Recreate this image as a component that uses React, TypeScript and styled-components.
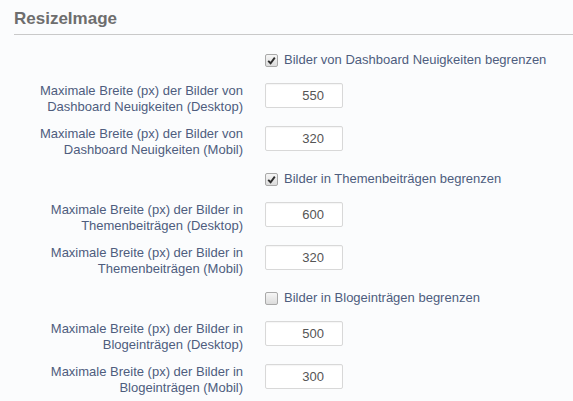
import styled, { createGlobalStyle } from 'styled-components';

const GlobalStyle = createGlobalStyle`
  html, body {
    margin: 0;
    padding: 0;
    background: #fbfcfd;
  }
  body {
    font-family: 'Liberation Sans', Arial, sans-serif;
  }
`;

const Page = styled.div`
  width: 573px;
  height: 401px;
  overflow: hidden;
  padding-left: 14px;
  box-sizing: border-box;
`;

const Heading = styled.h2`
  margin: 0;
  padding-top: 8px;
  height: 26px;
  font-size: 17px;
  line-height: 22px;
  font-weight: bold;
  color: #6e6e6e;
  border-bottom: 1px solid #c9c9c9;
`;

const Form = styled.div`
  display: flex;
  flex-direction: column;
  padding-top: 15px;
`;

const Row = styled.div<{ $check?: boolean }>`
  display: grid;
  grid-template-columns: 229px 1fr;
  column-gap: 22px;
  align-items: start;
  height: ${(p) => (p.$check ? '22px' : '32px')};
  margin-bottom: 11px;
`;

const Label = styled.label`
  text-align: right;
  font-size: 13px;
  line-height: 16px;
  color: #4e5d7e;
`;

const CheckLabel = styled.label`
  grid-column: 2;
  display: flex;
  align-items: center;
  gap: 6px;
  padding-top: 2px;
  font-size: 13px;
  line-height: 16px;
  color: #4e5d7e;
`;

const Box = styled.span`
  width: 11px;
  height: 11px;
  border: 1px solid #a9a9a9;
  border-radius: 2px;
  background: linear-gradient(#f6f6f6, #dcdcdc);
  display: flex;
  align-items: center;
  justify-content: center;
`;

const NumberInput = styled.input`
  width: 78px;
  height: 25px;
  box-sizing: border-box;
  border: 1px solid #d8d8d8;
  border-radius: 2px;
  background: #fff;
  text-align: right;
  padding: 0 18px 0 4px;
  font-family: 'Liberation Sans', Arial, sans-serif;
  font-size: 13px;
  color: #555;
  box-shadow: inset 0 1px 1px rgba(0, 0, 0, 0.04);
`;

const Check = ({ checked }: { checked: boolean }) => (
  <Box>
    {checked && (
      <svg width="9" height="9" viewBox="0 0 9 9">
        <path d="M1.2 4.8 L3.6 7.2 L7.8 1.6" fill="none" stroke="#2d2d2d" strokeWidth="1.9" />
      </svg>
    )}
  </Box>
);

type Group = { check: string; checked: boolean; name: string; desktop: string; mobile: string; prep: string };

const groups: Group[] = [
  { check: 'Bilder von Dashboard Neuigkeiten begrenzen', checked: true, name: 'Dashboard Neuigkeiten', prep: 'von', desktop: '550', mobile: '320' },
  { check: 'Bilder in Themenbeiträgen begrenzen', checked: true, name: 'Themenbeiträgen', prep: 'in', desktop: '600', mobile: '320' },
  { check: 'Bilder in Blogeinträgen begrenzen', checked: false, name: 'Blogeinträgen', prep: 'in', desktop: '500', mobile: '300' },
];

export default function App() {
  return (
    <Page>
      <GlobalStyle />
      <Heading>ResizeImage</Heading>
      <Form>
        {groups.map((g) => (
          <div key={g.check}>
            <Row $check>
              <CheckLabel>
                <Check checked={g.checked} />
                {g.check}
              </CheckLabel>
            </Row>
            <Row>
              <Label>
                Maximale Breite (px) der Bilder {g.prep}
                <br />
                {g.name} (Desktop)
              </Label>
              <NumberInput defaultValue={g.desktop} />
            </Row>
            <Row>
              <Label>
                Maximale Breite (px) der Bilder {g.prep}
                <br />
                {g.name} (Mobil)
              </Label>
              <NumberInput defaultValue={g.mobile} />
            </Row>
          </div>
        ))}
      </Form>
    </Page>
  );
}
